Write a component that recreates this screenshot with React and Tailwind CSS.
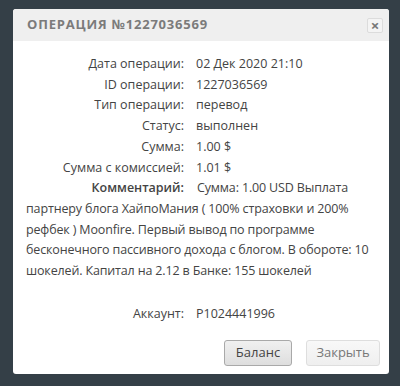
const rows = [
  ["Дата операции:", "02 Дек 2020 21:10"],
  ["ID операции:", "1227036569"],
  ["Тип операции:", "перевод"],
  ["Статус:", "выполнен"],
  ["Сумма:", "1.00 $"],
  ["Сумма с комиссией:", "1.01 $"],
];

const font = { fontFamily: '"Open Sans", "Liberation Sans", sans-serif' };

export default function App() {
  return (
    <div className="h-[386px] w-[400px] overflow-hidden bg-[#343f47] pl-[13px] pt-[9px]" style={font}>
      <div className="flex h-[365px] w-[376px] flex-col rounded-[3px] bg-white">
        <div className="flex h-[32px] items-center justify-between rounded-t-[3px] bg-[#efefef] pl-[14px] pr-[6px]">
          <span className="text-[13px] font-bold tracking-[0.8px] text-[#7b7b7b]">ОПЕРАЦИЯ №1227036569</span>
          <button
            type="button"
            className="flex h-[15px] w-[16px] items-center justify-center rounded-[2px] border border-[#dcdcdc] bg-[#f4f4f4] text-[15px] font-bold leading-none text-[#777]"
          >
            ×
          </button>
        </div>

        <div className="pl-[13px] pr-[6px] pt-[13px] text-[12.5px] leading-[20.7px] text-[#444]">
          {rows.map(([label, value]) => (
            <div key={label} className="flex">
              <span className="w-[158px] shrink-0 text-right">{label}</span>
              <span className="ml-[12px]">{value}</span>
            </div>
          ))}
          <p className="tracking-[-0.15px]">
            <span className="mr-[13px] inline-block w-[158px] text-right font-semibold tracking-normal">Комментарий:</span>
            Сумма: 1.00 USD Выплата партнеру блога ХайпоМания ( 100% страховки и 200% рефбек ) Moonfire. Первый вывод по программе бесконечного пассивного дохода с блогом. В обороте: 10 шокелей. Капитал на 2.12 в Банке: 155 шокелей
          </p>
          <div className="mt-[22px] flex">
            <span className="w-[158px] shrink-0 text-right">Аккаунт:</span>
            <span className="ml-[12px]">P1024441996</span>
          </div>
        </div>

        <div className="mt-auto flex justify-end gap-[14px] pb-[8px] pr-[9px]">
          <button
            type="button"
            className="h-[26px] w-[68px] rounded-[3px] border border-[#a9a9a9] bg-gradient-to-b from-[#f0f0f0] to-[#dedede] text-[13px] text-[#444]"
          >
            Баланс
          </button>
          <button
            type="button"
            className="h-[26px] w-[74px] rounded-[3px] border border-[#dedede] bg-gradient-to-b from-[#f8f8f8] to-[#efefef] text-[13px] text-[#777]"
          >
            Закрыть
          </button>
        </div>
      </div>
    </div>
  );
}
